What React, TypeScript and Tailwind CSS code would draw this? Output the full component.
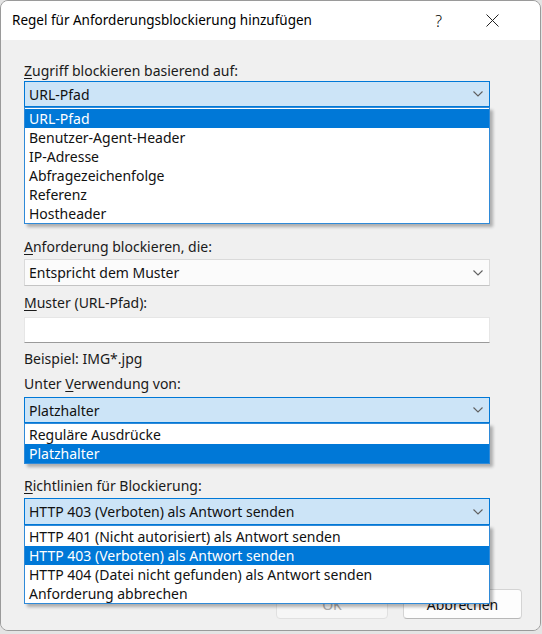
import React from "react";

const FONT = "font-['Segoe_UI','Noto_Sans','Open_Sans',sans-serif]";

function Chevron() {
  return (
    <svg width="10" height="6" viewBox="0 0 10 6" className="shrink-0">
      <path d="M0.5 0.5 L5 5 L9.5 0.5" fill="none" stroke="#606060" strokeWidth="1.1" />
    </svg>
  );
}

function Label({ ak, rest, pre = "" }: { ak: string; rest: string; pre?: string }) {
  return (
    <div className="h-[20px] leading-[20px] text-[#1a1a1a]">
      {pre}
      <span className="underline underline-offset-2">{ak}</span>
      {rest}
    </div>
  );
}

function ListBox({ items, selected }: { items: string[]; selected: number }) {
  return (
    <ul className="absolute left-0 right-0 top-full z-10 border border-[#2f8ad8] bg-white pt-[1px] shadow-[3px_3px_3px_rgba(0,0,0,0.28)]">
      {items.map((it, i) => (
        <li
          key={it}
          className={`h-[19px] pl-[4px] leading-[19px] whitespace-nowrap ${
            i === selected ? "bg-[#0078d7] text-white" : "text-[#111]"
          }`}
        >
          {it}
        </li>
      ))}
    </ul>
  );
}

function OpenCombo({
  value,
  items,
  selected,
  h,
  className = "",
}: {
  value: string;
  items: string[];
  selected: number;
  h: string;
  className?: string;
}) {
  return (
    <div className={`relative ${className}`}>
      <div
        className={`flex ${h} items-center justify-between border border-[#0078d7] bg-[#cce4f7] pl-[4px] pr-[6px] text-[#111]`}
      >
        <span>{value}</span>
        <Chevron />
      </div>
      <ListBox items={items} selected={selected} />
    </div>
  );
}

export default function App() {
  return (
    <div className={`h-[634px] w-[542px] bg-[#e4e4e4] ${FONT} text-[14px]`}>
      <div className="flex h-[631px] w-[541px] flex-col overflow-hidden rounded-lg border border-[#9a9a9a]">
        {/* title bar */}
        <div className="flex h-[39px] shrink-0 items-center bg-white pl-[11px] text-[13.5px] text-black">
          <span className="flex-1">Regel für Anforderungsblockierung hinzufügen</span>
          <span className="mr-[44px] text-[16px] font-light">?</span>
          <svg width="13" height="13" viewBox="0 0 13 13" className="mr-[41px]">
            <path d="M0.5 0.5 L12.5 12.5 M12.5 0.5 L0.5 12.5" stroke="#222" strokeWidth="1" />
          </svg>
        </div>

        {/* body */}
        <div className="flex flex-1 flex-col bg-[#f0f0f0]">
          <div className="w-[489px] pl-[23px]">
            <div className="mt-[21px]">
              <Label ak="Z" rest="ugriff blockieren basierend auf:" />
            </div>
            <OpenCombo
              h="h-[26px]"
              value="URL-Pfad"
              selected={0}
              className="z-30"
              items={[
                "URL-Pfad",
                "Benutzer-Agent-Header",
                "IP-Adresse",
                "Abfragezeichenfolge",
                "Referenz",
                "Hostheader",
              ]}
            />

            <div className="mt-[130px]">
              <Label ak="A" rest="nforderung blockieren, die:" />
            </div>
            <div className="mt-[2px] flex h-[27px] items-center justify-between border border-[#dadada] border-b-[#c4c4c4] bg-[#fbfbfb] pl-[4px] pr-[6px] text-[#111]">
              <span>Entspricht dem Muster</span>
              <Chevron />
            </div>

            <div className="mt-[7px]">
              <Label ak="M" rest="uster (URL-Pfad):" />
            </div>
            <div className="mt-[4px] h-[26px] border border-[#e6e6e6] border-b-[#9a9a9a] bg-white" />

            <div className="mt-[6px] h-[20px] leading-[20px] text-[#1a1a1a]">Beispiel: IMG*.jpg</div>

            <div className="mt-[5px]">
              <Label pre="Unter " ak="V" rest="erwendung von:" />
            </div>
            <OpenCombo
              h="h-[26px]"
              value="Platzhalter"
              selected={1}
              className="z-20 mt-[3px]"
              items={["Reguläre Ausdrücke", "Platzhalter"]}
            />

            <div className="mt-[53px]">
              <Label ak="R" rest="ichtlinien für Blockierung:" />
            </div>
            <OpenCombo
              h="h-[27px]"
              value="HTTP 403 (Verboten) als Antwort senden"
              selected={1}
              className="z-20 mt-[2px]"
              items={[
                "HTTP 401 (Nicht autorisiert) als Antwort senden",
                "HTTP 403 (Verboten) als Antwort senden",
                "HTTP 404 (Datei nicht gefunden) als Antwort senden",
                "Anforderung abbrechen",
              ]}
            />
          </div>

          {/* buttons */}
          <div className="mt-[64px] flex justify-end gap-[15px] pr-[18px]">
            <button
              type="button"
              disabled
              className="h-[30px] w-[112px] rounded border border-[#e0e0e0] bg-[#f6f6f6] text-[#a8a8a8]"
            >
              OK
            </button>
            <button
              type="button"
              className="h-[30px] w-[119px] rounded border border-[#d4d4d4] border-b-[#b8b8b8] bg-[#fdfdfd] text-[#111]"
            >
              Abbrechen
            </button>
          </div>
        </div>
      </div>
    </div>
  );
}
